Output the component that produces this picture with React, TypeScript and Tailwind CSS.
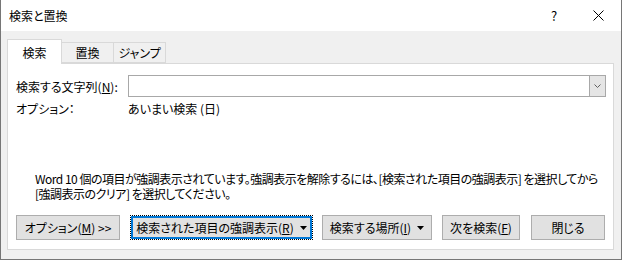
import React from 'react'

function Caret() {
  return (
    <svg width="7" height="4" viewBox="0 0 7 4" className="ml-[6px] shrink-0">
      <path d="M0 0h7L3.5 4z" fill="#000" />
    </svg>
  )
}

function Btn({
  width,
  focused,
  children,
}: {
  width: string
  focused?: boolean
  children: React.ReactNode
}) {
  if (focused) {
    return (
      <div className={`${width} h-[25px] border border-dotted border-black`}>
        <div className="w-full h-full border-2 border-[#0078d7] bg-[#e1e1e1] flex items-center justify-center">
          {children}
        </div>
      </div>
    )
  }
  return (
    <div
      className={`${width} h-[25px] border border-[#adadad] bg-[#e1e1e1] flex items-center justify-center`}
    >
      {children}
    </div>
  )
}

export default function App() {
  return (
    <div className="w-[622px] h-[260px] flex flex-col border-x border-b border-[#767676] bg-[#f0f0f0] text-[12px] leading-[15px] text-black font-['Segoe_UI','Noto_Sans_CJK_JP',sans-serif] [font-feature-settings:'palt'] overflow-hidden">
      {/* title bar */}
      <div className="h-[31px] bg-white flex items-center shrink-0">
        <span className="pl-[8px] flex-1">検索と置換</span>
        <div className="w-[44px] h-full flex items-center justify-center text-[13px]">?</div>
        <div className="w-[45px] h-full flex items-center justify-center">
          <svg width="11" height="11" viewBox="0 0 11 11">
            <path d="M0.5 0.5l10 10M10.5 0.5l-10 10" stroke="#000" strokeWidth="1" />
          </svg>
        </div>
      </div>

      {/* body */}
      <div className="flex-1 pl-[6px] pr-[7px] pt-[8px] pb-[9px] flex flex-col">
        {/* tabs */}
        <div className="flex items-end h-[25px] relative z-10">
          <div className="w-[55px] h-[25px] bg-white border border-b-0 border-[#d9d9d9] flex items-center justify-center pt-[1px]">
            検索
          </div>
          <div className="w-[52px] h-[21px] border border-l-0 border-[#d9d9d9] flex items-center justify-center mb-[1px]">
            置換
          </div>
          <div className="w-[52px] h-[21px] border border-l-0 border-[#d9d9d9] flex items-center justify-center mb-[1px]">
            ジャンプ
          </div>
        </div>

        {/* panel */}
        <div className="flex-1 -mt-[1px] bg-white border border-[#d9d9d9] pl-[8px] pr-[7px] pt-[11px] pb-[9px] flex flex-col">
          <div className="flex items-center h-[22px]">
            <span className="w-[112px] shrink-0">
              検索する文字列(<span className="underline">N</span>):
            </span>
            <div className="flex-1 h-[22px] border border-[#a8a8a8] flex">
              <div className="flex-1" />
              <div className="w-[16px] h-full bg-[#e5e5e5] border-l border-[#a8a8a8] flex items-center justify-center">
                <svg width="7" height="4" viewBox="0 0 7 4">
                  <path d="M0.5 0.5L3.5 3.5L6.5 0.5" stroke="#606060" fill="none" strokeWidth="1" />
                </svg>
              </div>
            </div>
          </div>

          <div className="flex items-center h-[15px] mt-[4px]">
            <span className="w-[112px] shrink-0">オプション：</span>
            <span>あいまい検索 (日)</span>
          </div>

          <div className="mt-[55px] pl-[19px] leading-[15px] whitespace-nowrap tracking-[-0.5px]">
            <div>
              Word 10 個の項目が強調表示されています。強調表示を解除するには、[検索された項目の強調表示] を選択してから
            </div>
            <div>[強調表示のクリア] を選択してください。</div>
          </div>

          <div className="mt-auto flex items-center">
            <Btn width="w-[104px]">
              オプション(<span className="underline">M</span>) &gt;&gt;
            </Btn>
            <div className="ml-[10px]">
              <Btn width="w-[183px]" focused>
                検索された項目の強調表示(<span className="underline">R</span>)
                <Caret />
              </Btn>
            </div>
            <div className="ml-[9px]">
              <Btn width="w-[110px]">
                検索する場所(<span className="underline">I</span>)
                <Caret />
              </Btn>
            </div>
            <div className="ml-[10px]">
              <Btn width="w-[78px]">
                次を検索(<span className="underline">F</span>)
              </Btn>
            </div>
            <div className="ml-[11px]">
              <Btn width="w-[74px]">閉じる</Btn>
            </div>
          </div>
        </div>
      </div>
    </div>
  )
}
